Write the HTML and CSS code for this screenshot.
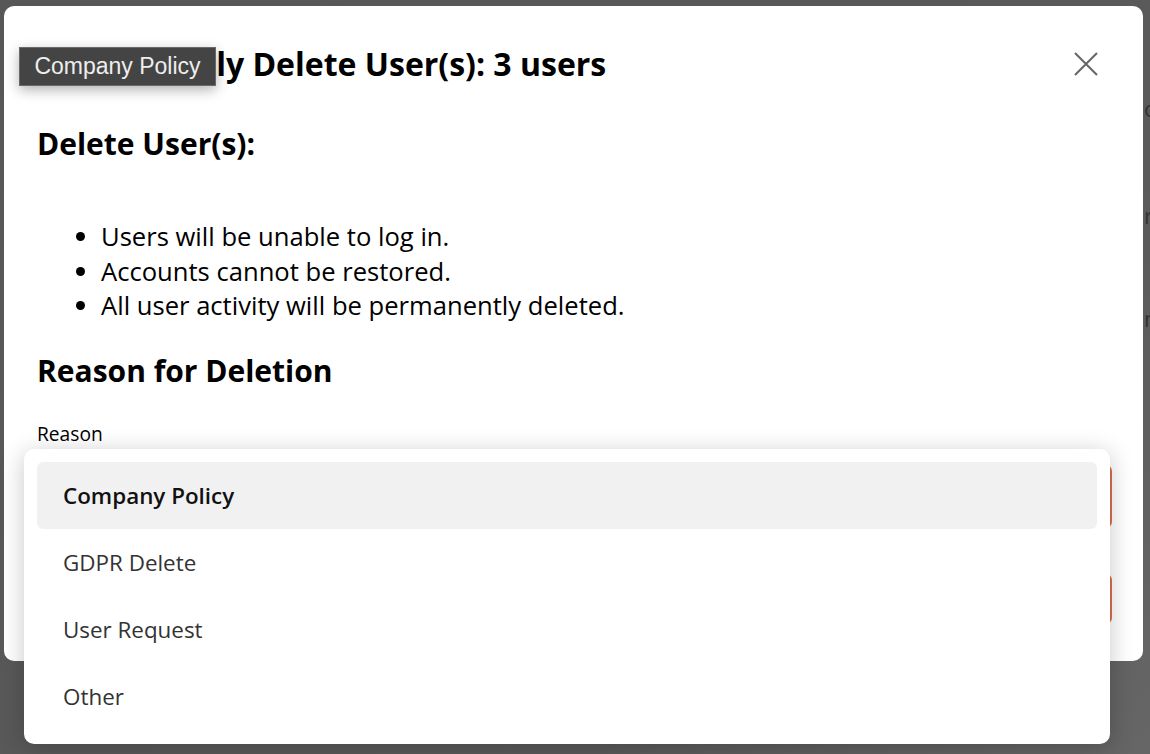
FILE: index.html
```html
<!DOCTYPE html>
<html lang="en">
<head>
    <meta charset="UTF-8">
    <meta name="viewport" content="width=device-width, initial-scale=1.0">
    <title>Delete Users</title>
    <link rel="stylesheet" href="styles.css">
</head>
<body>

<div class="page-behind">
    <span class="behind-glyph glyph-one">o</span>
    <span class="behind-glyph glyph-two">r</span>
    <span class="behind-glyph glyph-three">n</span>
</div>

<div class="overlay">
    <div class="modal">
        <div class="modal-header">
            <h1 class="modal-title">Permanently Delete User(s): 3 users</h1>
            <button class="close-button" aria-label="Close">
                <svg width="24" height="24" viewBox="0 0 24 24">
                    <path d="M1 1 L23 23 M23 1 L1 23" stroke="#666" stroke-width="2" fill="none"/>
                </svg>
            </button>
        </div>

        <h2 class="section-title">Delete User(s):</h2>
        <ul class="warning-list">
            <li>Users will be unable to log in.</li>
            <li>Accounts cannot be restored.</li>
            <li>All user activity will be permanently deleted.</li>
        </ul>

        <h2 class="section-title reason-title">Reason for Deletion</h2>
        <label class="field-label">Reason</label>
        <div class="select-box"></div>

        <div class="modal-footer">
            <button class="delete-button"></button>
        </div>
    </div>
</div>

<div class="dropdown">
    <div class="dropdown-item selected">Company Policy</div>
    <div class="dropdown-item">GDPR Delete</div>
    <div class="dropdown-item">User Request</div>
    <div class="dropdown-item">Other</div>
</div>

<div class="tooltip">Company Policy</div>

</body>
</html>
```

FILE: styles.css
```css
body {
    font-family: "Open Sans", sans-serif;
    background: linear-gradient(135deg, #575757 0%, #5a5a5a 70%, #666666 100%);
    margin: 0;
    padding: 0;
    height: 754px;
    overflow: hidden;
    color: #000;
    position: relative;
}

/* bits of the page under the dimmed overlay */
.page-behind {
    position: absolute;
    left: 1144px;
    top: 0;
    width: 20px;
    height: 400px;
    overflow: hidden;
}

.behind-glyph {
    position: absolute;
    left: 0;
    color: #333;
    font-size: 22px;
    line-height: 24px;
}

.glyph-one { top: 96px; }
.glyph-two { top: 203px; }
.glyph-three { top: 306px; }

.overlay {
    position: relative;
    padding: 6px 7px 0 4px;
}

.modal {
    background-color: #fff;
    border-radius: 10px;
    height: 655px;
    box-sizing: border-box;
    padding: 0 31px 0 33px;
    display: flex;
    flex-direction: column;
}

.modal-header {
    display: flex;
    align-items: center;
    justify-content: space-between;
    height: 116px;
    padding-right: 14px;
}

.modal-title {
    font-size: 32px;
    font-weight: 700;
    margin: 0;
    margin-top: -1px;
}

.close-button {
    background: none;
    border: none;
    padding: 0;
    width: 24px;
    height: 24px;
    cursor: pointer;
}

.section-title {
    font-size: 30px;
    font-weight: 700;
    margin: 2px 0 0 0;
    line-height: 40px;
}

.warning-list {
    margin: 56px 0 0 0;
    padding-left: 64px;
    font-size: 25.6px;
    line-height: 34.5px;
}

.reason-title {
    margin-top: 27px;
}

.field-label {
    display: block;
    font-size: 19.2px;
    margin-top: 30px;
    line-height: 26px;
}

.select-box {
    margin-top: 18px;
    height: 63px;
    border: 2px solid #d9714e;
    border-radius: 6px;
    box-sizing: border-box;
}

.modal-footer {
    display: flex;
    justify-content: flex-end;
    margin-top: 46px;
}

.delete-button {
    width: 140px;
    height: 50px;
    background-color: #d9714e;
    border: none;
    border-radius: 6px;
    color: #fff;
}

.dropdown {
    position: absolute;
    left: 24px;
    top: 449px;
    width: 1086px;
    height: 295px;
    box-sizing: border-box;
    padding: 13px;
    background-color: #fff;
    border-radius: 10px;
    box-shadow: 0 4px 24px rgba(0, 0, 0, 0.22);
}

.dropdown-item {
    height: 67px;
    display: flex;
    align-items: center;
    padding-left: 26px;
    font-size: 22.4px;
    color: #333;
    border-radius: 6px;
}

.dropdown-item.selected {
    background-color: #f1f1f1;
    color: #111;
    font-weight: 600;
}

.tooltip {
    position: absolute;
    left: 19px;
    top: 47px;
    width: 197px;
    height: 39px;
    box-sizing: border-box;
    background-color: #444;
    border: 1px solid #6a6a6a;
    color: #eee;
    font-family: "Liberation Sans", Arial, sans-serif;
    font-size: 23px;
    display: flex;
    align-items: center;
    justify-content: center;
    box-shadow: 0 4px 12px rgba(0, 0, 0, 0.3);
}
```
